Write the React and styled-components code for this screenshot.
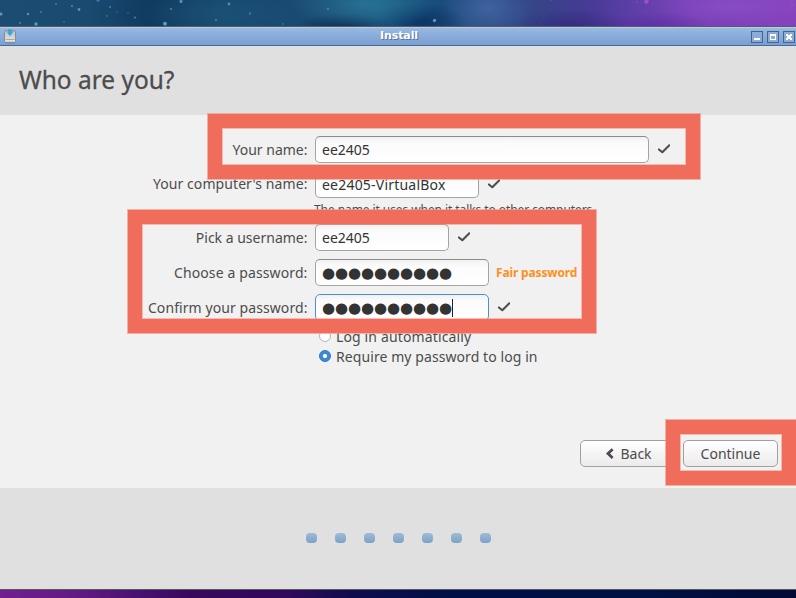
import React from "react";
import styled, { createGlobalStyle, css } from "styled-components";

const GlobalStyle = createGlobalStyle`
  * { box-sizing: border-box; }
  body { margin: 0; }
`;

const Desktop = styled.main`
  position: relative;
  display: flex;
  flex-direction: column;
  width: 796px;
  height: 598px;
  overflow: hidden;
  color: #4c4c4c;
  font: 14px/27px "Noto Sans", sans-serif;
  background: #000f45;
`;

const Sky = styled.div`
  position: relative;
  flex: none;
  height: 26px;
  overflow: hidden;
  background:
    radial-gradient(ellipse 75px 26px at 365px 4px, rgba(44, 122, 156, 0.75), transparent),
    radial-gradient(ellipse 50px 14px at 345px 27px, rgba(8, 32, 72, 0.75), transparent),
    radial-gradient(ellipse 46px 20px at 420px 22px, rgba(6, 42, 92, 0.7), transparent),
    radial-gradient(ellipse 46px 30px at 488px 8px, rgba(72, 112, 172, 0.65), transparent),
    radial-gradient(ellipse 60px 18px at 570px 26px, rgba(44, 34, 116, 0.6), transparent),
    radial-gradient(ellipse 60px 14px at 650px 26px, rgba(88, 38, 158, 0.6), transparent),
    radial-gradient(ellipse 80px 18px at 730px 6px, rgba(146, 88, 204, 0.5), transparent),
    radial-gradient(ellipse 80px 20px at 220px 14px, rgba(32, 86, 122, 0.5), transparent),
    linear-gradient(90deg, #1c4c72 0, #1a4a70 90px, #113a60 150px, #174a70 220px, #1a4a72 330px,
      #1c5880 380px, #164c78 430px, #2a4c84 480px, #364488 540px, #483a96 590px, #6040aa 640px, #7a40b6 690px, #8642bc 796px);
`;

const Stars = styled.svg`
  display: block;
`;

const Window = styled.section`
  display: flex;
  flex-direction: column;
  flex: none;
  height: 564px;
  border-top: 1px solid #585b5c;
  border-bottom: 1px solid #55575a;
  background: #f1f1f1;
`;

const TitleBar = styled.header`
  display: grid;
  grid-template-columns: 52px 1fr 45px;
  align-items: center;
  flex: none;
  height: 19px;
  border-top: 1px solid #b5cceb;
  border-bottom: 1px solid #476b9c;
  background: linear-gradient(#98b8e2, #7a9fd0);
`;

const AppIcon = styled.svg`
  display: block;
  margin-left: 3px;
`;

const WindowName = styled.div`
  padding-right: 5px;
  margin-top: -2px;
  text-align: center;
  color: #fff;
  font: bold 11px/15px "DejaVu Sans", sans-serif;
  letter-spacing: -0.1px;
  text-shadow: 1px 1px 0 #5877a0;
`;

const Controls = styled.div`
  display: flex;
  gap: 4px;
`;

const Control = styled.svg`
  display: block;
  flex: none;
`;

const Heading = styled.div`
  flex: none;
  height: 69px;
  padding: 15px 19px;
  background: #e0e0e0;
`;

const Question = styled.h1`
  margin: 0;
  font-size: 26px;
  font-weight: 400;
  line-height: 37px;
  white-space: nowrap;
  -webkit-text-stroke: 0.3px #4c4c4c;
  transform: scaleX(0.94);
  transform-origin: left;
`;

const Form = styled.div`
  display: flex;
  flex-direction: column;
  gap: 8px;
  flex: none;
  padding-top: 21px;
`;

const Row = styled.div`
  display: flex;
  align-items: center;
  height: 27px;
`;

const Label = styled.label`
  width: 307.5px;
  margin-right: 7.5px;
  margin-top: ${(p) => p.$lift || 0}px;
  text-align: right;
  white-space: nowrap;
  letter-spacing: ${(p) => p.$track || 0}px;
`;

const Field = styled.div`
  display: flex;
  align-items: center;
  width: ${(p) => p.$width}px;
  height: 27px;
  padding-left: 6px;
  border: 1px solid #a3a3a3;
  border-top-color: #8c8c8c;
  border-radius: 5px;
  background: linear-gradient(#f1f1f1, #fbfbfb 6px, #fff);
  color: #333;
  white-space: nowrap;
  letter-spacing: ${(p) => p.$track || 0}px;
  ${(p) =>
    p.$focused &&
    css`
      border-color: #4a90d9;
    `}
`;

const Secret = styled.span`
  font: 15px/25px "DejaVu Sans", sans-serif;
  letter-spacing: -0.1px;
  margin-top: 2px;
`;

const Caret = styled.span`
  width: 1px;
  height: 18px;
  background: #222;
`;

const CheckMark = styled.svg`
  display: block;
  margin: -1px 0 0 9px;
`;

const Strength = styled.strong`
  margin-left: 7px;
  color: #ff8f20;
  font-size: 12px;
  letter-spacing: -0.15px;
`;

const Hint = styled.p`
  height: 26px;
  margin: -8px 0;
  padding-left: 314px;
  font-size: 12px;
  line-height: 23px;
  letter-spacing: -0.08px;
`;

const Options = styled.div`
  flex: 1;
  padding: 5px 0 0 319px;
`;

const Option = styled.label`
  display: flex;
  align-items: center;
  gap: 5px;
  height: 20px;
  letter-spacing: ${(p) => p.$track}px;
`;

const Radio = styled.span`
  width: 12px;
  height: 12px;
  border: 1px solid #b4b4b4;
  border-radius: 50%;
  background: #fff;
  ${(p) =>
    p.$checked &&
    css`
      border-color: #2a76c0;
      background: radial-gradient(circle, #fff 0 1.6px, #3d8ad4 2.5px);
    `}
`;

const Actions = styled.div`
  display: flex;
  justify-content: flex-end;
  gap: 6px;
  flex: none;
  padding: 0 18px 21px 0;
`;

const Button = styled.button`
  display: flex;
  align-items: center;
  justify-content: center;
  gap: 6px;
  width: ${(p) => p.$width}px;
  height: 27px;
  padding: 0;
  border: 1px solid #a0a0a0;
  border-radius: 5px;
  background: linear-gradient(#fff, #ebebeb);
  color: inherit;
  font: inherit;
  line-height: 25px;
`;

const Footer = styled.footer`
  display: flex;
  justify-content: center;
  align-items: center;
  gap: 18px;
  flex: none;
  height: 101px;
  background: #e0e0e0;
`;

const Dot = styled.i`
  width: 11px;
  height: 10px;
  margin-bottom: 1px;
  border-radius: 4px;
  background: linear-gradient(#9dbbd7, #7ba2c6);
`;

const Ground = styled.div`
  flex: 1;
  background: linear-gradient(90deg, #701e90 0, #641a84 70px, #481070 140px, #38085c 190px,
    #30085c 290px, #100c4c 350px, #000f46 450px, #001044 650px, #020a34 796px);
`;

const Highlight = styled.div`
  position: absolute;
  left: ${(p) => p.$x}px;
  top: ${(p) => p.$y}px;
  width: ${(p) => p.$w}px;
  height: ${(p) => p.$h}px;
  border: 14px solid #f16d5b;
  box-shadow: 0 0 0 1px rgba(241, 150, 136, 0.7), inset 0 0 0 1px rgba(241, 150, 136, 0.6);
  pointer-events: none;
`;

const stars = [
  [1, 14, 1.5, "#68a9e0"], [28, 14, 1.3, "#5a9fb5"], [20, 23, 0.9, "#4d9bb5"], [36, 24, 1.7, "#5eb0bc"],
  [41, 12, 0.9, "#468eab"], [56, 4, 0.9, "#4d92aa"], [72, 6, 1, "#50a0b5"], [79, 9.5, 1.4, "#58a8bb"],
  [64, 22, 0.8, "#4790a8"], [98, 0, 1.7, "#477edb"], [110, 7, 1, "#4a91aa"], [107, 16, 0.9, "#347f9d"],
  [117, 12, 0.8, "#367a98"], [128, 13, 0.8, "#337998"], [135, 17.5, 1, "#4697ad"], [165, 23.7, 1.9, "#62b8cb"],
  [171, 9, 1, "#469bb5"], [181, 1.5, 1.6, "#55a5b6"], [229, 4, 1.4, "#5e9eac"], [216, 20, 1.1, "#4792ac"],
  [250, 13.5, 0.9, "#649eb5"], [283, 24, 0.9, "#347798"], [328, 9, 1.1, "#409aaf"], [434.5, 20.5, 1.7, "#8298c2"],
  [544, 16, 0.8, "#6058a8"], [551, 0, 0.8, "#6a60b0"], [637, 2, 0.9, "#9a44c4"], [646.5, 1.5, 2.2, "#b04cd6"],
  [792, 5, 0.9, "#b04cc8"],
];

const Tick = () => (
  <CheckMark width="12" height="10" viewBox="0 0 12 10">
    <path d="M0.9 5.4 4.3 8.3 11.3 1.2" fill="none" stroke="#4c4c4c" strokeWidth="2" strokeLinecap="round" strokeLinejoin="round" />
  </CheckMark>
);

const ControlBox = ({ children }) => (
  <Control width="12" height="12" viewBox="0 0 12 12" shapeRendering="crispEdges">
    <rect x="0.5" y="0.5" width="11" height="11" fill="#8bacd9" stroke="#42658f" />
    {children}
  </Control>
);

export default function App() {
  return (
    <Desktop>
      <GlobalStyle />
      <Sky>
        <Stars width="796" height="26">
          {stars.map(([x, y, r, fill]) => (
            <circle key={`${x}-${y}`} cx={x} cy={y} r={r} fill={fill} fillOpacity="0.85" />
          ))}
        </Stars>
      </Sky>
      <Window>
        <TitleBar>
          <AppIcon width="14" height="15" viewBox="0 0 14 15">
            <defs>
              <linearGradient id="drive" x1="0" y1="0" x2="0" y2="1">
                <stop offset="0" stopColor="#bfc1c2" />
                <stop offset="1" stopColor="#e7e7e5" />
              </linearGradient>
            </defs>
            <rect x="2" y="13" width="10" height="1.3" fill="#6682a8" />
            <rect x="1.5" y="1.9" width="11" height="11.4" rx="0.6" fill="url(#drive)" stroke="#858c94" />
            <path d="M2.5 10.5h9" stroke="#a4a6a7" />
            <path d="M5 0.3h4v2.9h1.2L7 7.2 3.8 3.2H5z" fill="#38a9d8" />
          </AppIcon>
          <WindowName>Install</WindowName>
          <Controls>
            <ControlBox><path d="M3 7h6v2H3z" fill="#fff" /></ControlBox>
            <ControlBox><path d="M3 3h6v6H3zM4 5v3h4V5z" fillRule="evenodd" fill="#fff" /></ControlBox>
            <ControlBox><path d="M3 3h2v1h2V3h2v2H8v2h1v2H7V8H5v1H3V7h1V5H3z" fill="#fff" /></ControlBox>
          </Controls>
        </TitleBar>
        <Heading>
          <Question>Who are you?</Question>
        </Heading>
        <Form>
          <Row>
            <Label>Your name:</Label>
            <Field $width={334}>ee2405</Field>
            <Tick />
          </Row>
          <Row>
            <Label $track={0.08} $lift={-2}>Your computer's name:</Label>
            <Field $width={164} $track={0.21}>ee2405-VirtualBox</Field>
            <Tick />
          </Row>
          <Hint>The name it uses when it talks to other computers.</Hint>
          <Row>
            <Label>Pick a username:</Label>
            <Field $width={134}>ee2405</Field>
            <Tick />
          </Row>
          <Row>
            <Label $track={0.12}>Choose a password:</Label>
            <Field $width={174}><Secret>●●●●●●●●●●</Secret></Field>
            <Strength>Fair password</Strength>
          </Row>
          <Row>
            <Label $track={0.08}>Confirm your password:</Label>
            <Field $width={174} $focused><Secret>●●●●●●●●●●</Secret><Caret /></Field>
            <Tick />
          </Row>
        </Form>
        <Options>
          <Option $track={0.14}><Radio />Log in automatically</Option>
          <Option $track={0.08}><Radio $checked />Require my password to log in</Option>
        </Options>
        <Actions>
          <Button $width={97}>
            <svg width="9" height="12" viewBox="0 0 9 12">
              <path d="M7.6 1.2 3 5.6 7.6 10" fill="none" stroke="#4c4c4c" strokeWidth="2.8" />
            </svg>
            Back
          </Button>
          <Button $width={95}>Continue</Button>
        </Actions>
        <Footer>
          {Array.from({ length: 7 }, (_, i) => <Dot key={i} />)}
        </Footer>
      </Window>
      <Ground />
      <Highlight $x={208} $y={114} $w={492} $h={65} />
      <Highlight $x={128} $y={210} $w={468} $h={123} />
      <Highlight $x={666} $y={420} $w={130} $h={65} />
    </Desktop>
  );
}
